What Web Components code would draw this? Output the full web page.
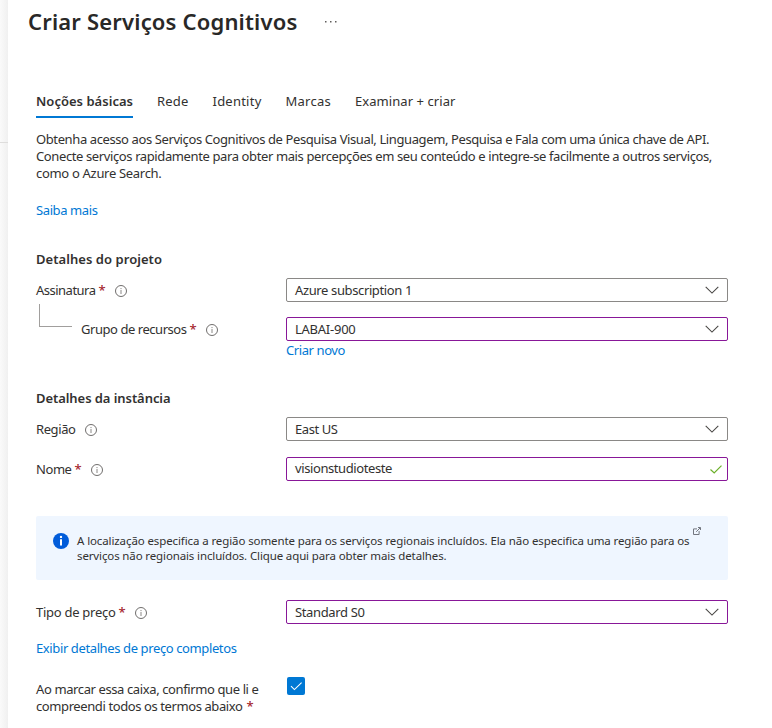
<!DOCTYPE html>
<html lang="pt-BR"><head><meta charset="utf-8"><title>Criar Serviços Cognitivos</title>
<style>
html,body{margin:0;height:728px;overflow:hidden;background:#fff}
body{font:13px/17px "Noto Sans","Open Sans",sans-serif;color:#323130}
</style></head><body>
<create-page></create-page>
<script>
const define=(name,html,after)=>customElements.define(name,class extends HTMLElement{
  connectedCallback(){
    if(this.shadowRoot)return;
    this.attachShadow({mode:'open'}).innerHTML=html;
    if(after)after.call(this,this.shadowRoot);
  }
});

/* One line of text, tracked so that it fills the width given in "w". */
define('fit-line','<style>:host{display:block;white-space:pre;width:max-content}</style><span><slot></slot></span>',function(r){
  const w=+this.getAttribute('w'),n=[...this.textContent].length,s=r.querySelector('span');
  if(w)s.style.letterSpacing=((w-s.getBoundingClientRect().width)/n).toFixed(3)+'px';
});

define('info-icon',`<style>:host{display:block;width:12px;height:12px}svg{display:block}</style>
<svg width="12" height="12" viewBox="0 0 12 12" fill="none" stroke="#605e5c"><circle cx="6" cy="6" r="5.5" stroke-width=".9"/><path d="M6 5v4M6 3v1.1" stroke="#8a8886"/></svg>`);

define('tab-item',`<style>:host{display:block;height:32px;line-height:34px;border-bottom:2px solid transparent}
:host([active]){font-weight:600;border-color:#0078d4}</style><slot></slot>`);

define('select-box',`<style>
:host{display:flex;box-sizing:border-box;width:442px;height:24px;padding:0 8px;border:1px solid #8a8886;border-radius:2px;align-items:center;justify-content:space-between}
:host([edited]){border-color:#881798}
:host([valid]){padding-right:5px}
.ok{display:none}:host([valid]) .ok{display:block}:host([valid]) .down{display:none}
:host([valid]) slot{display:block;margin-top:-1px}
</style><slot></slot>
<svg class="down" width="14" height="8" viewBox="0 0 14 8" fill="none" stroke="#494745" stroke-width="1.1"><path d="M.7.9 7 7.1 13.3.9"/></svg>
<svg class="ok" width="12" height="9" viewBox="0 0 12 9" fill="none" stroke="#6bb029" stroke-width="1.2"><path d="M.5 4.5 4.2 8 11.5.7"/></svg>`);

define('field-row',`<style>
:host{display:grid;grid-template-columns:250px 442px;height:24px;align-items:center}
.label{display:flex;align-items:center}
:host([indent]) .label{padding-left:45px}
.req{display:none;color:#a4262c;margin-left:3px;font-weight:500}:host([required]) .req{display:block}
info-icon{margin:1px 0 0 9px}
</style><div class="label"><slot name="label"></slot><span class="req">*</span><info-icon></info-icon></div><slot></slot>`);

define('info-banner',`<style>
:host{display:flex;box-sizing:border-box;width:692px;height:64px;padding:17px 0 0 17px;border-radius:2px;background:#eff6ff;font-size:11.5px;line-height:15px}
.i{flex:none;margin-right:8px}.ext{flex:none;margin:-6px 0 0 4px}
.copy{width:612px}
</style><svg class="i" width="16" height="16" viewBox="0 0 16 16"><circle cx="8" cy="8" r="8" fill="#015cda"/><circle cx="8" cy="3.9" r="1.2" fill="#fff"/><path d="M7 6.2h2v6.3H7z" fill="#fff"/></svg>
<div class="copy"><slot></slot></div>
<svg class="ext" width="8" height="8" viewBox="0 0 8 8" fill="none" stroke="#737780"><path d="M4 1.9H.5v5.6h5.6V4M3.2 4.8 7.2.8M5 .5h2.5V3"/></svg>`);

define('check-box',`<style>:host{display:block;width:18px;height:18px;border-radius:2px;background:#0078d4}svg{display:block}</style>
<svg width="18" height="18" fill="none" stroke="#fff" stroke-width="1.1"><path d="M4 9.2 7.4 12.6 14.6 5.6"/></svg>`);

define('create-page',`<style>
:host{display:grid;grid-template-columns:8px 764px;height:728px}
.edge{background:linear-gradient(90deg,#fafafa,#f0f0f0);padding-top:142px;box-sizing:border-box}
.edge i{display:block;height:1px;background:#dedddc}
header{display:flex;align-items:center;height:44px;padding-left:20px;gap:27px}
h1{margin:0 0 2px;font-size:22px;line-height:30px;font-weight:600;color:#292827}
main{padding-left:28px}
nav{display:flex;gap:24px;margin-top:40px}
.intro{margin-top:13px}
.link{color:#0078d4}
h2{margin:0;font-size:13px;line-height:18px;font-weight:600}
.tree{height:15px;display:flex;padding-left:3px}
.tree i{box-sizing:border-box;width:33px;height:23px;margin-top:2px;border:solid #a19f9d;border-width:0 0 1px 1px;flex:none}
.terms{display:grid;grid-template-columns:251px 18px;margin-top:20px}
.terms .copy{padding-top:4px}.terms b{font-weight:500;color:#a4262c}
.last{display:flex;gap:4px}
</style>
<div class="edge"><i></i></div>
<div>
<header><h1><fit-line w="269.5">Criar Serviços Cognitivos</fit-line></h1><svg width="12" height="3" fill="#605e5c"><path d="M0 0h1.5v1.5H0zM5 0h1.5v1.5H5zM10 0h1.5v1.5H10z"/></svg></header>
<main>
<nav><tab-item active><fit-line w="97">Noções básicas</fit-line></tab-item><tab-item><fit-line w="31.5">Rede</fit-line></tab-item><tab-item><fit-line w="49">Identity</fit-line></tab-item><tab-item><fit-line w="45.5">Marcas</fit-line></tab-item><tab-item><fit-line w="100.5">Examinar + criar</fit-line></tab-item></nav>
<div class="intro"><fit-line w="673">Obtenha acesso aos Serviços Cognitivos de Pesquisa Visual, Linguagem, Pesquisa e Fala com uma única chave de API.</fit-line><fit-line w="676">Conecte serviços rapidamente para obter mais percepções em seu conteúdo e integre-se facilmente a outros serviços,</fit-line><fit-line w="125.5">como o Azure Search.</fit-line></div>
<fit-line class="link" w="61.5" style="margin-top:20px">Saiba mais</fit-line>
<h2 style="margin-top:31px"><fit-line w="126">Detalhes do projeto</fit-line></h2>
<field-row required style="margin-top:10px"><fit-line slot="label" w="59.5">Assinatura</fit-line><select-box><fit-line w="117">Azure subscription 1</fit-line></select-box></field-row>
<div class="tree"><i></i></div>
<field-row required indent><fit-line slot="label" w="105.5">Grupo de recursos</fit-line><select-box edited><fit-line w="60.5">LABAI-900</fit-line></select-box></field-row>
<fit-line class="link" w="59" style="margin:1px 0 0 250px">Criar novo</fit-line>
<h2 style="margin-top:30px"><fit-line w="134.5">Detalhes da instância</fit-line></h2>
<field-row style="margin-top:10px"><fit-line slot="label" w="39.5">Região</fit-line><select-box><fit-line w="42.5">East US</fit-line></select-box></field-row>
<field-row required style="margin-top:16px"><fit-line slot="label" w="35.5">Nome</fit-line><select-box edited valid><fit-line w="97">visionstudioteste</fit-line></select-box></field-row>
<info-banner style="margin-top:35px"><fit-line w="612.5">A localização especifica a região somente para os serviços regionais incluídos. Ela não especifica uma região para os</fit-line><fit-line w="369.5">serviços não regionais incluídos. Clique aqui para obter mais detalhes.</fit-line></info-banner>
<field-row required style="margin-top:20px"><fit-line slot="label" w="79.5">Tipo de preço</fit-line><select-box edited><fit-line w="69.5">Standard S0</fit-line></select-box></field-row>
<fit-line class="link" w="200.5" style="margin-top:16px">Exibir detalhes de preço completos</fit-line>
<div class="terms"><div class="copy"><fit-line w="222.5">Ao marcar essa caixa, confirmo que li e</fit-line><div class="last"><fit-line w="206.5">compreendi todos os termos abaixo</fit-line><b>*</b></div></div><check-box></check-box></div>
</main></div>`);
</script></body></html>
